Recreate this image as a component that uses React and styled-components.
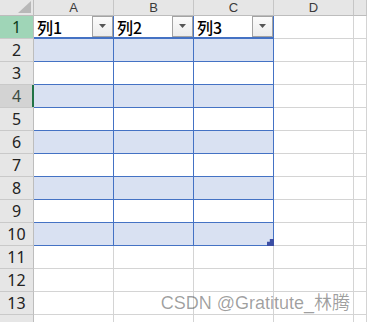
import React from "react";
import styled, { createGlobalStyle, css } from "styled-components";

const Global = createGlobalStyle`
  html, body { margin: 0; padding: 0; background: #fff; overflow: hidden; }
  #root { width: 367px; height: 322px; overflow: hidden; position: relative; }
`;

const Sheet = styled.div`
  display: grid;
  grid-template-columns: 34px repeat(4, 80px) 1fr;
  grid-template-rows: 16px repeat(14, 23px);
  width: 367px;
  font-family: "Noto Sans CJK SC", "Noto Sans", sans-serif;
`;

const Corner = styled.div`
  box-sizing: border-box;
  background: #e6e6e6;
  border-right: 1px solid #bdbdbd;
  border-bottom: 1px solid #bdbdbd;
  display: flex;
  align-items: flex-end;
  justify-content: flex-end;
  padding: 0 2px 2px 0;
`;

const ColHead = styled.div`
  box-sizing: border-box;
  background: #e6e6e6;
  border-right: 1px solid #c6c6c6;
  border-bottom: 1px solid #bdbdbd;
  color: #3a3a3a;
  font-size: 13px;
  line-height: 15px;
  display: flex;
  align-items: center;
  justify-content: center;
  font-family: "Liberation Sans", sans-serif;
`;

const RowHead = styled.div`
  box-sizing: border-box;
  position: relative;
  background: ${(p) => (p.$state === "sel" ? "#9fd5b7" : p.$state === "active" ? "#d3d3d3" : "#e6e6e6")};
  border-right: 1px solid #bdbdbd;
  border-bottom: 1px solid #c9c9c9;
  color: ${(p) => (p.$state === "sel" ? "#0c3d20" : p.$state === "active" ? "#3b4a40" : "#222")};
  font-size: 16px;
  line-height: 22px;
  text-align: center;
  font-family: "Noto Sans", sans-serif;
  ${(p) =>
    p.$state === "active" &&
    css`
      &::after {
        content: "";
        position: absolute;
        right: -1px;
        top: 0;
        bottom: 0;
        width: 2px;
        background: #217346;
      }
    `}
`;

const Cell = styled.div`
  box-sizing: border-box;
  position: relative;
  background: #fff;
  border-right: 1px solid #d4d4d4;
  border-bottom: 1px solid #d4d4d4;
`;

const TableCell = styled.div`
  box-sizing: border-box;
  position: relative;
  background: ${(p) => (p.$band ? "#d9e1f2" : "#fff")};
  border-right: 1px solid #4472c4;
  border-bottom: ${(p) => (p.$head ? "2px" : "1px")} solid #4472c4;
  display: flex;
  align-items: center;
  justify-content: space-between;
  padding: 0 0 0 3px;
`;

const HeadText = styled.span`
  font-family: "Noto Sans CJK SC", sans-serif;
  font-size: 16px;
  font-weight: 500;
  color: #000;
  line-height: 20px;
`;

const Dropdown = styled.div`
  box-sizing: border-box;
  width: 21px;
  height: 21px;
  margin-top: -1px;
  border: 1px solid #a3a3a3;
  background: linear-gradient(#fbfbfb, #ececec);
  display: flex;
  align-items: center;
  justify-content: center;
`;

const Handle = styled.div`
  position: absolute;
  right: -1px;
  bottom: -1px;
  width: 7px;
  height: 7px;
  background: #3c4fa5;
  clip-path: polygon(0 40%, 40% 40%, 40% 0, 100% 0, 100% 100%, 0 100%);
`;

const Watermark = styled.div`
  position: absolute;
  right: 17px;
  top: 292px;
  font-family: "Liberation Sans", "Noto Sans CJK SC", sans-serif;
  font-size: 18px;
  line-height: 22px;
  color: rgba(0, 0, 0, 0.38);
  white-space: nowrap;
`;

const Arrow = () => (
  <svg width="7" height="4" viewBox="0 0 7 4">
    <polygon points="0,0 7,0 3.5,4" fill="#555" />
  </svg>
);

const CornerTri = () => (
  <svg width="13" height="12" viewBox="0 0 13 12">
    <polygon points="13,0 13,12 0,12" fill="#b8b8b8" />
  </svg>
);

export default function App() {
  const cols = ["A", "B", "C", "D", "E"];
  const rows = [];
  for (let r = 1; r <= 14; r++) {
    const state = r === 1 ? "sel" : r === 4 ? "active" : "";
    const cells = [
      <RowHead key={`h${r}`} $state={state}>
        {r <= 13 ? r : ""}
      </RowHead>,
    ];
    for (let c = 0; c < 5; c++) {
      const key = `${r}-${c}`;
      if (c < 3 && r <= 10) {
        if (r === 1) {
          cells.push(
            <TableCell key={key} $head>
              <HeadText>列{c + 1}</HeadText>
              <Dropdown>
                <Arrow />
              </Dropdown>
            </TableCell>
          );
        } else {
          cells.push(
            <TableCell key={key} $band={r % 2 === 0}>
              {r === 10 && c === 2 && <Handle />}
            </TableCell>
          );
        }
      } else {
        cells.push(<Cell key={key} />);
      }
    }
    rows.push(cells);
  }
  return (
    <>
      <Global />
      <Sheet>
        <Corner>
          <CornerTri />
        </Corner>
        {cols.map((c) => (
          <ColHead key={c}>{c === "E" ? "" : c}</ColHead>
        ))}
        {rows}
      </Sheet>
      <Watermark>CSDN @Gratitute_林腾</Watermark>
    </>
  );
}
